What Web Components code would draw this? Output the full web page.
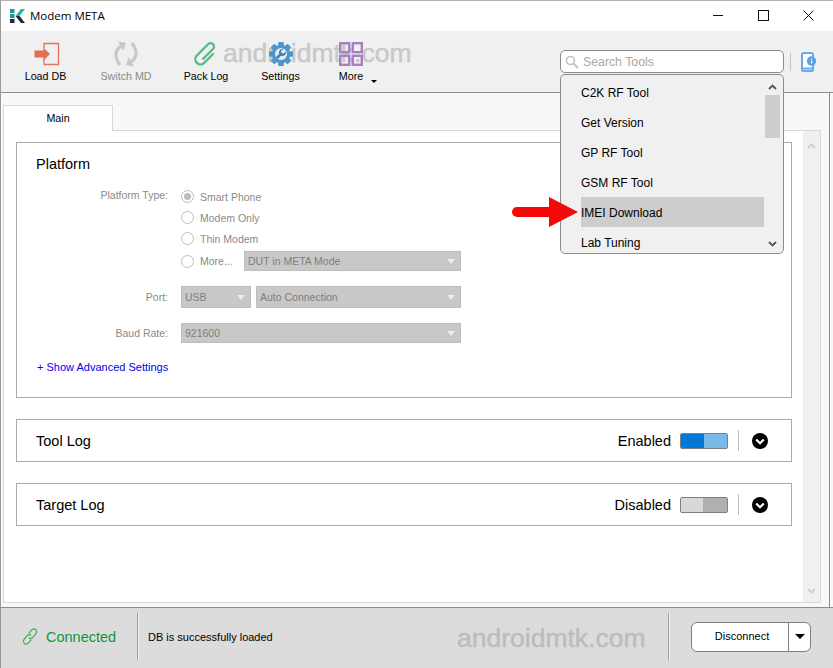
<!DOCTYPE html>
<html>
<head>
<meta charset="utf-8">
<title>Modem META</title>
<style>
    html, body { margin: 0; height: 100%; }
    body { font-family: "Liberation Sans", Arial, sans-serif; overflow: hidden; }
    mm-window { height: 668px; }
</style>
</head>
<body>

<mm-window>
    <mm-titlebar slot="title">Modem META</mm-titlebar>

    <mm-toolbar slot="toolbar">
        <mm-tool label="Load DB" icon="load" width="81"></mm-tool>
        <mm-tool label="Switch MD" icon="switch" width="80" disabled></mm-tool>
        <mm-tool label="Pack Log" icon="clip" width="80"></mm-tool>
        <mm-tool label="Settings" icon="gear" width="69"></mm-tool>
        <mm-tool label="More" icon="more" width="72" caret></mm-tool>
    </mm-toolbar>

    <mm-tabs slot="main">
        <mm-card heading="Platform">
            <mm-form>
                <mm-row label="Platform Type:" raised>
                    <mm-radio checked>Smart Phone</mm-radio>
                </mm-row>
                <mm-row><mm-radio>Modem Only</mm-radio></mm-row>
                <mm-row><mm-radio>Thin Modem</mm-radio></mm-row>
                <mm-row gap="2" style="min-height:20px">
                    <mm-radio short>More...</mm-radio>
                    <mm-select style="width:217px">DUT in META Mode</mm-select>
                </mm-row>
                <mm-row label="Port:" gap="15">
                    <mm-select style="width:70px;height:22px">USB</mm-select>
                    <mm-select style="width:205px;height:22px">Auto Connection</mm-select>
                </mm-row>
                <mm-row label="Baud Rate:" gap="15" style="min-height:20px">
                    <mm-select style="width:280px">921600</mm-select>
                </mm-row>
            </mm-form>
            <mm-link>+ Show Advanced Settings</mm-link>
        </mm-card>

        <mm-log-card heading="Tool Log" state="Enabled" on></mm-log-card>
        <mm-log-card heading="Target Log" state="Disabled"></mm-log-card>
    </mm-tabs>

    <mm-statusbar slot="status"></mm-statusbar>

    <mm-search slot="overlay"></mm-search>
</mm-window>

<script>
// shared font for everything, shadow roots do inherit it from the body
const ICONS = {
    load: `<svg width="28" height="24" viewBox="0 0 28 24">
        <path d="M12 6V1.500h14.500v21H12V17" fill="none" stroke="#e0735a" stroke-width="1.300"/>
        <path d="M2.500 8.500h9V5.500l6.500 6.500-6.500 6.500v-3h-9z" fill="#e0704f"/>
    </svg>`,
    switch: `<svg width="26" height="26" viewBox="0 0 26 26">
        <path d="M8.500 5C2.500 8.500 0.500 15 7 24" fill="none" stroke="#c8c8c8" stroke-width="3.200"/>
        <path d="M5 0.500l8 1.500-2.500 8z" fill="#c8c8c8"/>
        <path d="M17.500 21C23.500 17.500 25.500 11 19 2" fill="none" stroke="#c8c8c8" stroke-width="3.200"/>
        <path d="M21 25.500l-8-1.500 2.500-8z" fill="#c8c8c8"/>
    </svg>`,
    clip: `<svg width="26" height="26" viewBox="0 0 26 26">
        <path transform="rotate(45 13 13)" d="M18 8V20.500a5.200 5.200 0 0 1-10.400 0V4.500a3.400 3.400 0 0 1 6.800 0V18.500" fill="none" stroke="#56bd86" stroke-width="2.300" stroke-linecap="round"/>
    </svg>`,
    gear: `<svg width="24" height="24" viewBox="0 0 26 26">
        <g fill="#4d96cb">
            <rect x="10" y="0" width="6" height="26" rx="1"/>
            <rect x="10" y="0" width="6" height="26" rx="1" transform="rotate(45 13 13)"/>
            <rect x="10" y="0" width="6" height="26" rx="1" transform="rotate(90 13 13)"/>
            <rect x="10" y="0" width="6" height="26" rx="1" transform="rotate(135 13 13)"/>
            <circle cx="13" cy="13" r="10"/>
        </g>
        <circle cx="13" cy="13" r="6.500" fill="#e4ecf2"/>
        <path d="M16 7.500a4.200 4.200 0 0 0-5 5.500L7.500 16.500l2 2 3.500-3.500a4.200 4.200 0 0 0 5.500-5l-2.500 2.500-2.500-.5-.5-2.500z" fill="#3f7fae"/>
    </svg>`,
    more: `<svg width="24" height="24" viewBox="0 0 24 24" fill="none" stroke="#a67fc4" stroke-width="2.400">
        <rect x="1.200" y="1.200" width="9" height="9"/>
        <rect x="13.800" y="1.200" width="9" height="9"/>
        <rect x="1.200" y="13.800" width="9" height="9"/>
        <rect x="13.800" y="13.800" width="9" height="9"/>
    </svg>`
};

class MmWindow extends HTMLElement {
    constructor() {
        super();
        this.attachShadow({ mode: "open" });
        this.shadowRoot.innerHTML = `
        <style>
            :host { display: flex; flex-direction: column; position: relative; background: #f8f8f8;
                    border-top: 1px solid #b4b4b4; border-left: 1px solid #9a9a9a; box-sizing: border-box; overflow: hidden; }
            .main { flex: 1; min-height: 0; display: flex; flex-direction: column; }
        </style>
        <slot name="title"></slot>
        <slot name="toolbar"></slot>
        <div class="main"><slot name="main"></slot></div>
        <slot name="status"></slot>
        <slot name="overlay"></slot>`;
    }
}

class MmTitlebar extends HTMLElement {
    constructor() {
        super();
        this.attachShadow({ mode: "open" });
        this.shadowRoot.innerHTML = `
        <style>
            :host { display: flex; align-items: center; height: 30px; background: #fff; flex: none; box-sizing: border-box;
                    font-size: 12px; color: #000; padding: 0 0 1px 9px; }
            svg.logo { margin-right: 5px; }
            .name { flex: 1; font-family: "Open Sans", sans-serif; font-size: 11.500px; }
            .win { width: 45px; height: 29px; display: flex; align-items: center; justify-content: center; }
        </style>
        <svg class="logo" width="15" height="14" viewBox="0 0 15 14">
            <path d="M0 0h4.500v4H0zM0 5h4.500v4H0z" fill="#1a9a94"/>
            <path d="M0 10h4.500v4H0z" fill="#1c2b33"/>
            <path d="M15 0h-4L5.500 7H9.500z" fill="#27b3a8"/>
            <path d="M15 14h-4L5.500 7H9.500z" fill="#1c2b33"/>
        </svg>
        <span class="name"><slot></slot></span>
        <div class="win"><svg width="11" height="11"><rect x="0" y="5" width="10" height="1" fill="#111"/></svg></div>
        <div class="win"><svg width="11" height="11"><rect x=".5" y=".5" width="10" height="10" fill="none" stroke="#111"/></svg></div>
        <div class="win" style="margin-right:2px"><svg width="11" height="11"><path d="M.5.500l10 10M10.500.500l-10 10" stroke="#111" fill="none"/></svg></div>`;
    }
}

class MmToolbar extends HTMLElement {
    constructor() {
        super();
        this.attachShadow({ mode: "open" });
        this.shadowRoot.innerHTML = `
        <style>
            :host { display: flex; position: relative; height: 61px; flex: none; background: #f0f0f0;
                    border-bottom: 1px solid #8c8c8c; padding-left: 4px; }
            .mark { position: absolute; left: 222px; top: 7px; font: 26.500px "Liberation Sans", sans-serif;
                    color: #c9c9c9; -webkit-text-stroke: .5px #c9c9c9; z-index: 0; white-space: nowrap; }
            ::slotted(*) { z-index: 1; }
        </style>
        <span class="mark">androidmtk.com</span>
        <slot></slot>`;
    }
}

class MmTool extends HTMLElement {
    constructor() {
        super();
        this.attachShadow({ mode: "open" });
    }
    connectedCallback() {
        const disabled = this.hasAttribute("disabled");
        this.shadowRoot.innerHTML = `
        <style>
            :host { display: flex; flex-direction: column; align-items: center; position: relative;
                    width: ${this.getAttribute("width")}px; flex: none; font-size: 10.700px;
                    color: ${disabled ? "#8a8a8a" : "#000"}; }
            .ico { height: 26px; margin-top: 10px; display: flex; align-items: center; }
            .lbl { margin-top: 2px; line-height: 14px; }
            .caret { position: absolute; left: 56px; top: 49px; border: 3px solid transparent; border-top-color: #000; border-bottom: 0; }
        </style>
        <div class="ico">${ICONS[this.getAttribute("icon")]}</div>
        <div class="lbl">${this.getAttribute("label")}</div>
        ${this.hasAttribute("caret") ? '<i class="caret"></i>' : ""}`;
    }
}

class MmTabs extends HTMLElement {
    constructor() {
        super();
        this.attachShadow({ mode: "open" });
        this.shadowRoot.innerHTML = `
        <style>
            :host { display: flex; flex-direction: column; flex: 1; min-height: 0; box-sizing: border-box;
                    padding: 12px 2px 4px 2px; border-right: 1px solid #8c8c8c; margin-right: 3px; }
            .tab { width: 110px; background: #fff; border: 1px solid #d8d8d8; border-bottom: 0; padding-bottom: 2px;
                   box-sizing: border-box; font-size: 10.700px; display: flex; align-items: center; justify-content: center;
                   position: relative; z-index: 1; margin-bottom: -1px; height: 26px; }
            .pane { flex: 1; min-height: 0; background: #fff; border: 1px solid #d8d8d8; margin-right: 6px;
                    display: flex; }
            .body { flex: 1; padding: 11px 11px 0 12px; display: flex; flex-direction: column; gap: 21px; }
            .bar { width: 17px; background: #f0f0f0; display: flex; flex-direction: column; justify-content: space-between;
                   align-items: center; padding: 12px 0 8px; box-sizing: border-box; }
        </style>
        <div class="tab">Main</div>
        <div class="pane">
            <div class="body"><slot></slot></div>
            <div class="bar">
                <svg width="9" height="6"><path d="M1 5l3.500-3.500L8 5" fill="none" stroke="#d0d0d0" stroke-width="2"/></svg>
                <svg width="9" height="6"><path d="M1 1l3.500 3.500L8 1" fill="none" stroke="#d0d0d0" stroke-width="2"/></svg>
            </div>
        </div>`;
    }
}

class MmCard extends HTMLElement {
    constructor() {
        super();
        this.attachShadow({ mode: "open" });
    }
    connectedCallback() {
        this.shadowRoot.innerHTML = `
        <style>
            :host { display: block; height: 256px; box-sizing: border-box; border: 1px solid #aaa; padding: 12px 19px 0; }
            h2 { margin: 0 0 12px; font: 400 14.500px/19px "Liberation Sans", sans-serif; color: #000; }
        </style>
        <h2>${this.getAttribute("heading")}</h2>
        <slot></slot>`;
    }
}

class MmForm extends HTMLElement {
    constructor() {
        super();
        this.attachShadow({ mode: "open" });
        this.shadowRoot.innerHTML = `
        <style>:host { display: flex; flex-direction: column; font-size: 10.500px; color: #8a8a8a; }</style>
        <slot></slot>`;
    }
}

class MmRow extends HTMLElement {
    constructor() {
        super();
        this.attachShadow({ mode: "open" });
    }
    connectedCallback() {
        const gap = this.getAttribute("gap");
        this.shadowRoot.innerHTML = `
        <style>
            :host { display: flex; align-items: center; min-height: 21px; margin-top: ${gap ? gap : 0}px; }
            .lbl { width: 132px; text-align: right; margin-right: 13px; flex: none; white-space: nowrap;
                   ${this.hasAttribute("raised") ? "margin-bottom: 4px;" : ""} }
            .items { display: flex; align-items: center; gap: 5px; }
        </style>
        <div class="lbl">${this.getAttribute("label") || ""}</div>
        <div class="items"><slot></slot></div>`;
    }
}

class MmRadio extends HTMLElement {
    constructor() {
        super();
        this.attachShadow({ mode: "open" });
    }
    connectedCallback() {
        const on = this.hasAttribute("checked");
        this.shadowRoot.innerHTML = `
        <style>
            :host { display: flex; align-items: center; gap: 6px; ${this.hasAttribute("short") ? "width: 58px;" : ""} }
            i { width: 13px; height: 13px; box-sizing: border-box; border: 1px solid #bdbdbd; border-radius: 50%; background: #fff; display: flex;
                align-items: center; justify-content: center; }
            b { width: 7px; height: 7px; border-radius: 50%; background: #bdbdbd; }
        </style>
        <i>${on ? "<b></b>" : ""}</i><span><slot></slot></span>`;
    }
}

class MmSelect extends HTMLElement {
    constructor() {
        super();
        this.attachShadow({ mode: "open" });
        this.shadowRoot.innerHTML = `
        <style>
            :host { display: flex; align-items: center; height: 20px; box-sizing: border-box; background: #c8c8c8;
                    border: 1px solid #bdbdbd; padding: 0 5px 0 3px; font-size: 10.500px; color: #7e7e7e; flex: none; }
            span { flex: 1; white-space: nowrap; }
            i { border: 4px solid transparent; border-top: 5px solid #ececec; border-bottom: 0; }
        </style>
        <span><slot></slot></span><i></i>`;
    }
}

class MmLink extends HTMLElement {
    constructor() {
        super();
        this.attachShadow({ mode: "open" });
        this.shadowRoot.innerHTML = `
        <style>:host { display: block; margin: 17px 0 0 1px; font-size: 11px; line-height: 14px; color: #0000ee; }</style>
        <slot></slot>`;
    }
}

class MmLogCard extends HTMLElement {
    constructor() {
        super();
        this.attachShadow({ mode: "open" });
    }
    connectedCallback() {
        const on = this.hasAttribute("on");
        this.shadowRoot.innerHTML = `
        <style>
            :host { display: flex; align-items: center; height: 43px; box-sizing: border-box; border: 1px solid #aaa;
                    padding: 0 23px 0 19px; font-size: 14.500px; color: #000; }
            .name { flex: 1; }
            .sw { width: 48px; height: 16px; box-sizing: border-box; border: 1px solid #808080; border-radius: 2px;
                  display: flex; margin-left: 9px; overflow: hidden; }
            .a { width: ${on ? 23 : 22}px; background: ${on ? "#0078d7" : "#d8d8d8"}; }
            .b { flex: 1; background: ${on ? "#7ab8e8" : "#b0b0b0"}; }
            .sep { width: 1px; height: 21px; background: #bcbcbc; margin: 0 13px 0 10px; }
            svg { display: block; }
        </style>
        <span class="name">${this.getAttribute("heading")}</span>
        <span>${this.getAttribute("state")}</span>
        <div class="sw"><div class="a"></div><div class="b"></div></div>
        <div class="sep"></div>
        <svg width="16" height="16" viewBox="0 0 16 16">
            <circle cx="8" cy="8" r="8" fill="#000"/>
            <path d="M4.200 6.500L8 10.300l3.800-3.800" fill="none" stroke="#fff" stroke-width="2.200"/>
        </svg>`;
    }
}

class MmStatusbar extends HTMLElement {
    constructor() {
        super();
        this.attachShadow({ mode: "open" });
        this.shadowRoot.innerHTML = `
        <style>
            :host { display: flex; align-items: center; height: 61px; flex: none; box-sizing: border-box; background: #dcdcdc;
                    border-top: 1px solid #8c8c8c; font-size: 11px; color: #000; padding: 0 0 3px 21px; }
            .conn { display: flex; align-items: center; gap: 8px; width: 115px; flex: none; color: #119638; font-size: 14.500px; }
            .sep { width: 1px; height: 47px; background: #9e9e9e; flex: none; border-right: 1px solid #f2f2f2; }
            .msg { margin-left: 9px; width: 309px; flex: none; }
            .mark { flex: 1; font: 26.500px "Liberation Sans", sans-serif; color: #bdbdbd; -webkit-text-stroke: .5px #bdbdbd;
                    white-space: nowrap; margin-top: 3px; }
            .btn { display: flex; height: 30px; width: 120px; margin: 0 22px 0 21px; box-sizing: border-box; border: 1px solid #808080;
                   border-radius: 6px; background: #fff; flex: none; }
            .btn span { flex: 1; text-align: center; line-height: 27px; padding-left: 4px; border-right: 1px solid #808080; }
            .btn b { width: 21px; display: flex; align-items: center; justify-content: center; }
            .btn i { border: 4px solid transparent; border-top: 5px solid #000; border-bottom: 0; border-left-width: 5px; border-right-width: 5px; }
        </style>
        <div class="conn">
            <svg width="16" height="17" viewBox="1.500 1.500 13 13" fill="none" stroke="#3aa856" stroke-width=".9">
                <path d="M7 5.500l2-2.500c1-1.200 2.500-1.500 3.500-.7s1.200 2.300.2 3.500L10.500 8.500c-1 1.200-2.400 1.300-3.300.5"/>
                <path d="M9 10.500l-2 2.500c-1 1.200-2.500 1.500-3.500.7s-1.200-2.300-.2-3.500L5.500 7.500c1-1.200 2.400-1.300 3.300-.5"/>
            </svg>
            Connected
        </div>
        <div class="sep"></div>
        <div class="msg">DB is successfully loaded</div>
        <div class="mark">androidmtk.com</div>
        <div class="sep"></div>
        <div class="btn"><span>Disconnect</span><b><i></i></b></div>`;
    }
}

const TOOLS = ["C2K RF Tool", "Get Version", "GP RF Tool", "GSM RF Tool", "IMEI Download", "Lab Tuning"];

class MmSearch extends HTMLElement {
    constructor() {
        super();
        this.attachShadow({ mode: "open" });
        const rows = TOOLS.map(t => `<div class="item${t === "IMEI Download" ? " sel" : ""}">${t}</div>`).join("");
        this.shadowRoot.innerHTML = `
        <style>
            :host { position: absolute; left: 559px; top: 49px; width: 224px; font-size: 12px; color: #000; }
            .box { height: 23px; box-sizing: border-box; border: 1px solid #8c8c8c; border-radius: 5px; background: #fff;
                   display: flex; align-items: center; padding-left: 4px; gap: 4px; color: #a8a8a8; font-size: 12.300px; }
            .list { margin-top: 1px; height: 180px; box-sizing: border-box; border: 1px solid #8c8c8c; border-radius: 5px;
                    background: #f0f0f0; padding: 2px 0 0 20px; display: flex; position: relative; overflow: hidden; }
            .items { width: 183px; flex: none; }
            .item { height: 30px; line-height: 33px; white-space: nowrap; }
            .sel { background: #cdcdcd; }
            .bar { position: absolute; right: 3px; top: 1px; bottom: 1px; width: 15px; display: flex; flex-direction: column; align-items: center; }
            .bar svg { flex: none; margin-top: 8px; }
            .thumb { width: 15px; height: 43px; background: #cdcdcd; margin-top: 5px; }
            .sp { flex: 1; }
            .dn { margin: 0 0 5px !important; }
            .rule { position: absolute; left: 230px; top: 3px; width: 1px; height: 18px; background: #c4c4c4; }
            .phone { position: absolute; left: 241px; top: 2px; }
            .arrow { position: absolute; left: -48px; top: 147px; }
        </style>
        <div class="box">
            <svg width="14" height="14" viewBox="0 0 14 14"><circle cx="5.500" cy="5.500" r="4" fill="none" stroke="#c4c4c4" stroke-width="1.600"/><path d="M8.500 8.500l4.500 4.500" stroke="#c4c4c4" stroke-width="2.200"/></svg>
            Search Tools
        </div>
        <div class="rule"></div>
        <svg class="phone" width="16" height="20" viewBox="0 0 16 20">
            <path d="M2.500 1h8c.8 0 1.500.7 1.500 1.500v15c0 .8-.7 1.500-1.500 1.500h-8C1.700 19 1 18.300 1 17.500v-15C1 1.700 1.700 1 2.500 1z" fill="#fff" stroke="#6aa8ec" stroke-width="2"/>
            <rect x="1" y="15.500" width="11" height="2" fill="#6aa8ec"/>
            <circle cx="10.500" cy="9" r="4.700" fill="#5aa2e8"/>
            <rect x="10" y="6.500" width="1.200" height="1.200" fill="#fff"/><rect x="10" y="8.500" width="1.200" height="3" fill="#fff"/>
        </svg>
        <div class="list">
            <div class="items">${rows}</div>
            <div class="bar">
                <svg width="9" height="6"><path d="M1 5l3.500-3.500L8 5" fill="none" stroke="#555" stroke-width="1.800"/></svg>
                <div class="thumb"></div>
                <div class="sp"></div>
                <svg class="dn" width="9" height="6"><path d="M1 1l3.500 3.500L8 1" fill="none" stroke="#555" stroke-width="1.800"/></svg>
            </div>
        </div>
        <svg class="arrow" width="66" height="30" viewBox="0 0 66 30">
            <path d="M5 10H37V0l29 15-29 15V20H5a5 5 0 0 1 0-10z" fill="#f50a0a"/>
        </svg>`;
    }
}

customElements.define("mm-window", MmWindow);
customElements.define("mm-titlebar", MmTitlebar);
customElements.define("mm-toolbar", MmToolbar);
customElements.define("mm-tool", MmTool);
customElements.define("mm-tabs", MmTabs);
customElements.define("mm-card", MmCard);
customElements.define("mm-form", MmForm);
customElements.define("mm-row", MmRow);
customElements.define("mm-radio", MmRadio);
customElements.define("mm-select", MmSelect);
customElements.define("mm-link", MmLink);
customElements.define("mm-log-card", MmLogCard);
customElements.define("mm-statusbar", MmStatusbar);
customElements.define("mm-search", MmSearch);
</script>
</body>
</html>
